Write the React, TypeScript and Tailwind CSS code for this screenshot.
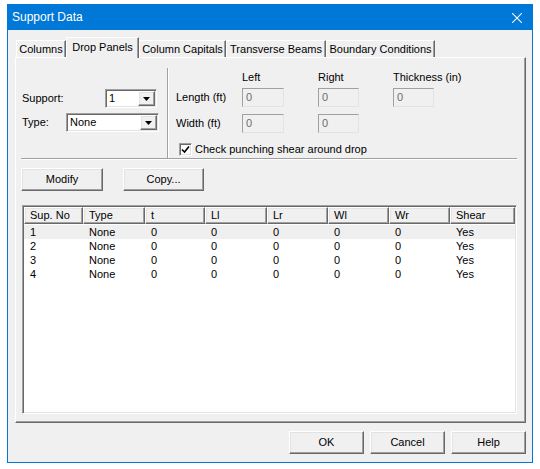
import React from "react";

const raised =
  "border border-t-white border-l-white border-r-[#696969] border-b-[#696969] shadow-[inset_-1px_-1px_#a0a0a0,inset_1px_1px_#e3e3e3]";
const sunken =
  "border border-t-[#a0a0a0] border-l-[#a0a0a0] border-r-white border-b-white shadow-[inset_1px_1px_#696969,inset_-1px_-1px_#e3e3e3]";
const flat =
  "border border-t-[#a0a0a0] border-l-[#a0a0a0] border-r-[#e3e3e3] border-b-[#e3e3e3]";

function Arrow() {
  return (
    <svg width="7" height="4" viewBox="0 0 7 4">
      <path d="M0 0h7L3.5 4z" fill="#000" />
    </svg>
  );
}

function Combo({ value, className }: { value: string; className: string }) {
  return (
    <div className={`${sunken} ${className} h-[19px] bg-white flex items-stretch p-[1px]`}>
      <span className="flex-1 pl-[2px] flex items-center">{value}</span>
      <span className={`${raised} w-[17px] bg-[#f0f0f0] flex items-center justify-center`}>
        <Arrow />
      </span>
    </div>
  );
}

function Box({ className }: { className: string }) {
  return (
    <div className={`${flat} ${className} h-[19px] bg-[#f0f0f0] pl-[3px] flex items-center text-[#6d6d6d]`}>
      0
    </div>
  );
}

function Button({ label, className }: { label: string; className: string }) {
  return (
    <div className={`${raised} ${className} h-[23px] bg-[#f0f0f0] flex items-center justify-center`}>
      {label}
    </div>
  );
}

const tabs = [
  { label: "Columns", w: "w-[50px]" },
  { label: "Drop Panels", w: "w-[73px]", active: true },
  { label: "Column Capitals", w: "w-[87px]" },
  { label: "Transverse Beams", w: "w-[100px]" },
  { label: "Boundary Conditions", w: "w-[109px]" },
];

const cols = [
  { label: "Sup. No", w: "w-[59px]" },
  { label: "Type", w: "w-[62px]" },
  { label: "t", w: "w-[60px]" },
  { label: "Ll", w: "w-[62px]" },
  { label: "Lr", w: "w-[61px]" },
  { label: "Wl", w: "w-[61px]" },
  { label: "Wr", w: "w-[61px]" },
  { label: "Shear", w: "w-[65px]" },
];

const rows = [1, 2, 3, 4].map((n) => [String(n), "None", "0", "0", "0", "0", "0", "Yes"]);

export default function App() {
  return (
    <div className="w-[540px] h-[469px] bg-white pt-[4px] pl-[7px] font-['Liberation_Sans',Arial,sans-serif] text-[11px] leading-[13px] text-black">
      <div className="w-[526px] h-[459px] border border-[#0078d7] bg-[#f0f0f0] flex flex-col">
        {/* title bar */}
        <div className="h-[25px] bg-[#0078d7] flex items-center justify-between pl-[4px] pr-[10px] text-white text-[12px]">
          <span>Support Data</span>
          <svg width="10" height="10" viewBox="0 0 10 10">
            <path d="M0 0L10 10M10 0L0 10" stroke="#fff" strokeWidth="1.1" />
          </svg>
        </div>

        {/* tabs */}
        <div className="mt-[7px] h-[20px] pl-[8px] flex items-end relative z-10">
          {tabs.map((t) => (
            <div
              key={t.label}
              className={`${t.w} flex items-center justify-center bg-[#f0f0f0] border-t border-l border-t-white border-l-white border-r border-r-[#696969] shadow-[inset_-1px_0_#a0a0a0] ${
                t.active ? "h-[21px] -mb-[1px] pb-[2px]" : "h-[17px]"
              }`}
            >
              {t.label}
            </div>
          ))}
        </div>

        {/* tab panel */}
        <div className="ml-[7px] w-[511px] h-[366px] border border-t-white border-l-white border-r-[#696969] border-b-[#696969] shadow-[inset_-1px_-1px_#a0a0a0] flex flex-col">
          <div className="mt-[10px] h-[90px] flex">
            <div className="w-[151px] pl-[6px] pt-[21px] flex flex-col gap-[5px]">
              <div className="flex items-center h-[19px]">
                <span className="w-[83px]">Support:</span>
                <Combo value="1" className="w-[52px]" />
              </div>
              <div className="flex items-center h-[19px]">
                <span className="w-[44px]">Type:</span>
                <Combo value="None" className="w-[93px]" />
              </div>
            </div>
            <div className="w-[2px] border-l border-l-[#a0a0a0] border-r border-r-white" />
            <div className="flex-1 pl-[7px] pt-[3px] flex flex-col">
              <div className="flex h-[13px]">
                <span className="w-[66px]" />
                <span className="w-[76px]">Left</span>
                <span className="w-[75px]">Right</span>
                <span>Thickness (in)</span>
              </div>
              <div className="flex items-center mt-[4px]">
                <span className="w-[66px]">Length (ft)</span>
                <Box className="w-[42px]" />
                <span className="w-[34px]" />
                <Box className="w-[41px]" />
                <span className="w-[34px]" />
                <Box className="w-[41px]" />
              </div>
              <div className="flex items-center mt-[7px]">
                <span className="w-[66px]">Width (ft)</span>
                <Box className="w-[42px]" />
                <span className="w-[34px]" />
                <Box className="w-[41px]" />
              </div>
              <div className="flex items-center mt-[10px] pl-[3px] gap-[3px]">
                <span className={`${sunken} w-[13px] h-[13px] bg-white flex items-center justify-center`}>
                  <svg width="9" height="9" viewBox="0 0 9 9">
                    <path d="M1 4.5L3.5 7L8 1.5" stroke="#000" strokeWidth="1.6" fill="none" />
                  </svg>
                </span>
                <span>Check punching shear around drop</span>
              </div>
            </div>
          </div>
          <div className="ml-[5px] w-[496px] h-[2px] border-t border-t-[#a0a0a0] border-b border-b-white" />

          <div className="mt-[8px] pl-[5px] flex gap-[20px]">
            <Button label="Modify" className="w-[82px]" />
            <Button label="Copy..." className="w-[81px]" />
          </div>

          {/* list view */}
          <div className={`${sunken} mt-[14px] ml-[6px] w-[495px] h-[209px] bg-white p-[1px] flex flex-col`}>
            <div className="flex h-[17px]">
              {cols.map((c) => (
                <div
                  key={c.label}
                  className={`${c.w} ${raised} bg-[#f0f0f0] pl-[5px] flex items-center`}
                >
                  {c.label}
                </div>
              ))}
            </div>
            <div className="mt-[1px] flex flex-col">
              {rows.map((r, i) => (
                <div key={i} className={`flex h-[14px] items-center ${i === 0 ? "bg-[#efefef]" : ""}`}>
                  {r.map((v, j) => (
                    <div key={j} className={`${cols[j].w} pl-[6px]`}>
                      {v}
                    </div>
                  ))}
                </div>
              ))}
            </div>
          </div>
        </div>

        {/* footer buttons */}
        <div className="mt-[8px] pr-[6px] flex justify-end gap-[6px]">
          <Button label="OK" className="w-[75px]" />
          <Button label="Cancel" className="w-[75px]" />
          <Button label="Help" className="w-[75px]" />
        </div>
      </div>
    </div>
  );
}
